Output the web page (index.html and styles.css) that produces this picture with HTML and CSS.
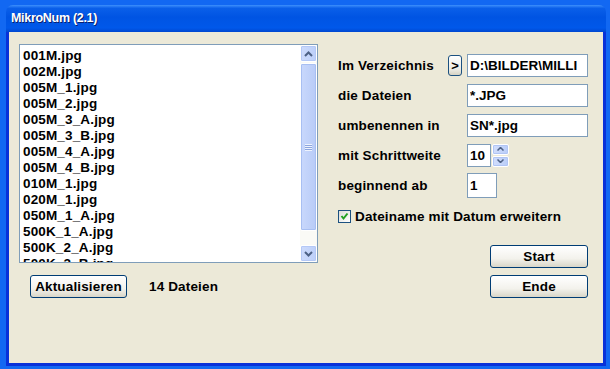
FILE: index.html
```html
<!DOCTYPE html>
<html>
<head>
<title>MikroNum (2.1)</title>
<link rel="stylesheet" href="styles.css">
</head>
<body>
<div class="window">
	<div class="titlebar">MikroNum (2.1)</div>
	<div class="client">
		<div class="leftcol">
			<div class="listbox">
				<div class="items">
					<div>001M.jpg</div>
					<div>002M.jpg</div>
					<div>005M_1.jpg</div>
					<div>005M_2.jpg</div>
					<div>005M_3_A.jpg</div>
					<div>005M_3_B.jpg</div>
					<div>005M_4_A.jpg</div>
					<div>005M_4_B.jpg</div>
					<div>010M_1.jpg</div>
					<div>020M_1.jpg</div>
					<div>050M_1_A.jpg</div>
					<div>500K_1_A.jpg</div>
					<div>500K_2_A.jpg</div>
					<div>500K_2_B.jpg</div>
				</div>
				<div class="vscroll">
					<div class="sbtn"><svg width="9" height="6" viewBox="0 0 9 6"><path d="M1 5 L4.5 1.5 L8 5" fill="none" stroke="#4d6185" stroke-width="2"/></svg></div>
					<div class="thumb"><span class="grip"></span></div>
					<div class="sbtn"><svg width="9" height="6" viewBox="0 0 9 6"><path d="M1 1 L4.5 4.5 L8 1" fill="none" stroke="#4d6185" stroke-width="2"/></svg></div>
				</div>
			</div>
			<div class="status">
				<button class="btn refresh">Aktualisieren</button>
				<span class="count">14 Dateien</span>
			</div>
		</div>
		<div class="rightcol">
			<div class="row">
				<span class="label">Im Verzeichnis</span>
				<button class="browse">&gt;</button>
				<input class="field" type="text" value="D:\BILDER\MILLI">
			</div>
			<div class="row">
				<span class="label">die Dateien</span>
				<span class="gap"></span>
				<input class="field" type="text" value="*.JPG">
			</div>
			<div class="row">
				<span class="label">umbenennen in</span>
				<span class="gap"></span>
				<input class="field" type="text" value="SN*.jpg">
			</div>
			<div class="row">
				<span class="label">mit Schrittweite</span>
				<span class="gap"></span>
				<input class="field small" type="text" value="10">
				<div class="spin">
					<div class="spinbtn"><svg width="7" height="4" viewBox="0 0 7 4"><path d="M0.5 3.5 L3.5 0.5 L6.5 3.5" fill="none" stroke="#4d6185" stroke-width="1.5"/></svg></div>
					<div class="spinbtn"><svg width="7" height="4" viewBox="0 0 7 4"><path d="M0.5 0.5 L3.5 3.5 L6.5 0.5" fill="none" stroke="#4d6185" stroke-width="1.5"/></svg></div>
				</div>
			</div>
			<div class="row">
				<span class="label">beginnend ab</span>
				<span class="gap"></span>
				<input class="field start" type="text" value="1">
			</div>
			<div class="checkrow">
				<span class="checkbox"><svg width="9" height="9" viewBox="0 0 9 9"><path d="M1.5 4 L3.5 6.5 L7.5 1.5" fill="none" stroke="#21a121" stroke-width="2"/></svg></span>
				<span class="label">Dateiname mit Datum erweitern</span>
			</div>
			<div class="actions">
				<button class="btn wide">Start</button>
				<button class="btn wide">Ende</button>
			</div>
		</div>
	</div>
</div>
</body>
</html>
```

FILE: styles.css
```css
* {
	box-sizing: border-box;
}
body {
	margin: 0;
	background-color: #1268f2;
	font-family: "Liberation Sans", Arial, sans-serif;
	font-weight: bold;
	font-size: 13.5px;
	letter-spacing: 0.15px;
	color: #000;
	overflow: hidden;
}
.window {
	margin: 5px 0 0 6px;
	width: 600px;
}
.titlebar {
	height: 27px;
	border-radius: 7px 7px 0 0;
	background: linear-gradient(#3d8ffc 0%, #0a5fe9 12%, #0054e3 45%, #0058ea 85%, #0047d0 100%);
	color: #fff;
	padding: 6px 0 0 5px;
	font-size: 12.5px;
	letter-spacing: -0.3px;
	text-shadow: 1px 1px 0 #0a1f6e;
}
.client {
	height: 334px;
	background-color: #ece9d8;
	border-left: 3px solid #0831d9;
	border-right: 3px solid #0831d9;
	border-bottom: 3px solid #0831d9;
	display: flex;
	padding: 12px 15px 0 10px;
	gap: 20px;
}
.leftcol {
	width: 300px;
}
.listbox {
	height: 219px;
	border: 1px solid #7f9db9;
	background-color: #fff;
	display: flex;
}
.items {
	flex: 1;
	overflow: hidden;
	padding: 3px 0 0 3px;
	line-height: 16px;
}
.vscroll {
	width: 17px;
	background-color: #fafaf6;
	display: flex;
	flex-direction: column;
}
.sbtn {
	height: 17px;
	border: 1px solid #fff;
	border-radius: 2px;
	background: linear-gradient(to right, #cddbfc, #bccff9);
	box-shadow: inset 0 0 0 1px #b4c8f6;
	display: flex;
	align-items: center;
	justify-content: center;
}
.thumb {
	flex: 1;
	margin: 1px 0 14px;
	border: 1px solid #fff;
	border-radius: 2px;
	background: linear-gradient(to right, #c9d8fc, #b8cbf7);
	box-shadow: inset 0 0 0 1px #a8bff2;
	display: flex;
	align-items: center;
	justify-content: center;
}
.grip {
	width: 7px;
	height: 7px;
	background: repeating-linear-gradient(#eef3fe 0 1px, #8ca5de 1px 2px);
}
.status {
	display: flex;
	align-items: center;
	margin-top: 12px;
	padding-left: 11px;
	gap: 22px;
}
.btn {
	font-family: "Liberation Sans", Arial, sans-serif;
	font-weight: bold;
	font-size: 13.5px;
	letter-spacing: 0.15px;
	height: 23px;
	border: 1px solid #003c74;
	border-radius: 3px;
	background: linear-gradient(#ffffff, #f3f2ec 60%, #d9d6c8);
	color: #000;
	padding: 0;
}
.refresh {
	width: 97px;
}
.rightcol {
	flex: 1;
	padding-top: 6px;
}
.row {
	height: 30px;
	display: flex;
	align-items: center;
}
.row .label {
	width: 110px;
	white-space: nowrap;
}
.gap {
	width: 19px;
}
.browse {
	height: 21px;
	width: 14px;
	margin-right: 5px;
	border: 1px solid #1c5180;
	border-radius: 3px;
	background: linear-gradient(#ffffff, #ecebe4 70%, #d6d3c4);
	font-family: "Liberation Sans", Arial, sans-serif;
	font-weight: bold;
	font-size: 13px;
	padding: 0;
}
.field {
	width: 121px;
	height: 23px;
	border: 1px solid #7f9db9;
	background-color: #fff;
	font-family: "Liberation Sans", Arial, sans-serif;
	font-weight: bold;
	font-size: 13.5px;
	letter-spacing: 0;
	padding: 0 1px 0 2px;
	color: #000;
}
.field.small {
	width: 24px;
}
.field.start {
	width: 30px;
	height: 25px;
}
.spin {
	width: 17px;
	height: 23px;
	margin-left: 1px;
	display: flex;
	flex-direction: column;
	gap: 1px;
}
.spinbtn {
	flex: 1;
	border-radius: 2px;
	background: linear-gradient(to right, #d2defc, #b9cdf8);
	box-shadow: inset 0 0 0 1px #b0c5f5;
	border: 1px solid #fff;
	display: flex;
	align-items: center;
	justify-content: center;
}
.checkrow {
	display: flex;
	align-items: center;
	height: 32px;
	gap: 4px;
}
.checkbox {
	width: 13px;
	height: 13px;
	border: 1px solid #1c5180;
	background: linear-gradient(135deg, #dcdcd7, #fff);
	display: flex;
	align-items: center;
	justify-content: center;
}
.actions {
	display: flex;
	flex-direction: column;
	align-items: flex-end;
	gap: 7px;
	margin-top: 13px;
}
.wide {
	width: 98px;
}
```
